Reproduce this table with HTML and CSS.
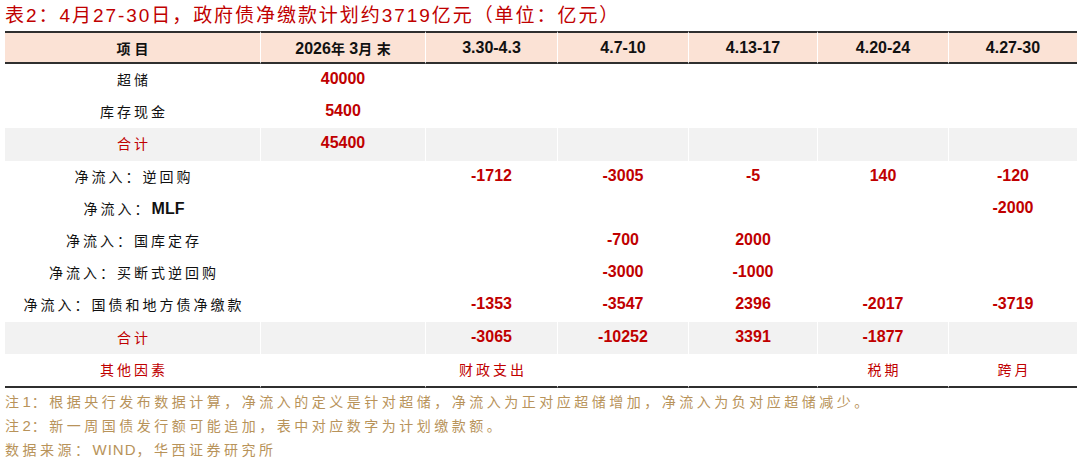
FILE: index.html
```html
<!DOCTYPE html>
<html lang="zh-CN">
<head>
<meta charset="utf-8">
<title>表2</title>
<link rel="stylesheet" href="styles.css">
</head>
<body>
<div class="page">
  <h1 class="title">表2：4月27-30日，政府债净缴款计划约3719亿元（单位：亿元）</h1>
  <table class="tbl">
    <colgroup>
      <col class="c1"><col class="c2"><col class="c3"><col class="c4"><col class="c5"><col class="c6"><col class="c7">
    </colgroup>
    <thead>
      <tr>
        <th><span class="cjk-h">项目</span></th>
        <th>2026<span class="cjk-hb">年</span> 3<span class="cjk-hb">月</span> <span class="cjk-hb">末</span></th>
        <th>3.30-4.3</th>
        <th>4.7-10</th>
        <th>4.13-17</th>
        <th>4.20-24</th>
        <th>4.27-30</th>
      </tr>
    </thead>
    <tbody>
      <tr><td class="lab">超储</td><td class="num">40000</td><td></td><td></td><td></td><td></td><td></td></tr>
      <tr><td class="lab">库存现金</td><td class="num">5400</td><td></td><td></td><td></td><td></td><td></td></tr>
      <tr class="gray"><td class="lab red">合计</td><td class="num">45400</td><td></td><td></td><td></td><td></td><td></td></tr>
      <tr><td class="lab">净流入：逆回购</td><td></td><td class="num">-1712</td><td class="num">-3005</td><td class="num">-5</td><td class="num">140</td><td class="num">-120</td></tr>
      <tr><td class="lab">净流入：<b class="lat">MLF</b></td><td></td><td></td><td></td><td></td><td></td><td class="num">-2000</td></tr>
      <tr><td class="lab">净流入：国库定存</td><td></td><td></td><td class="num">-700</td><td class="num">2000</td><td></td><td></td></tr>
      <tr><td class="lab">净流入：买断式逆回购</td><td></td><td></td><td class="num">-3000</td><td class="num">-1000</td><td></td><td></td></tr>
      <tr><td class="lab">净流入：国债和地方债净缴款</td><td></td><td class="num">-1353</td><td class="num">-3547</td><td class="num">2396</td><td class="num">-2017</td><td class="num">-3719</td></tr>
      <tr class="gray"><td class="lab red">合计</td><td></td><td class="num">-3065</td><td class="num">-10252</td><td class="num">3391</td><td class="num">-1877</td><td></td></tr>
      <tr class="last"><td class="lab red">其他因素</td><td></td><td class="lab red">财政支出</td><td></td><td></td><td class="lab red">税期</td><td class="lab red">跨月</td></tr>
    </tbody>
  </table>
  <div class="notes">
    <p>注<span class="lat">1</span>：根据央行发布数据计算，净流入的定义是针对超储，净流入为正对应超储增加，净流入为负对应超储减少。</p>
    <p>注<span class="lat">2</span>：新一周国债发行额可能追加，表中对应数字为计划缴款额。</p>
    <p>数据来源：<span class="lat">WIND</span>，华西证券研究所</p>
  </div>
</div>
</body>
</html>
```

FILE: styles.css
```css
html, body {
  margin: 0;
  padding: 0;
  background: #ffffff;
}

.page {
  width: 1089px;
  height: 464px;
  padding: 0 0 0 5px;
  box-sizing: border-box;
  font-family: "Liberation Sans", "Noto Sans CJK SC", sans-serif;
}

.title {
  margin: 0;
  height: 31px;
  line-height: 31px;
  font-size: 19px;
  font-weight: normal;
  letter-spacing: 1.95px;
  color: #c00000;
  font-family: "Liberation Sans", "Noto Sans CJK SC", sans-serif;
  white-space: nowrap;
}

.tbl {
  width: 1072px;
  table-layout: fixed;
  border-collapse: separate;
  border-spacing: 0;
}

.c1 { width: 255px; }
.c2 { width: 165px; }
.c3 { width: 132px; }
.c4 { width: 131px; }
.c5 { width: 129px; }
.c6 { width: 131px; }
.c7 { width: 129px; }

.tbl th {
  background: #fbe2d5;
  border-top: 2px solid #2f2f2f;
  border-bottom: 2px solid #2f2f2f;
  height: 29px;
  padding: 0;
  font-family: "Liberation Sans", "Noto Sans CJK SC", sans-serif;
  font-size: 16px;
  font-weight: bold;
  color: #111;
  text-align: center;
  white-space: nowrap;
}

.tbl th + th,
.tbl td + td {
  border-left: 1px solid #ffffff;
}

.cjk-h {
  font-family: "Noto Sans CJK SC", sans-serif;
  font-size: 14px;
  font-weight: bold;
  letter-spacing: 4px;
  padding-left: 4px;
}

.cjk-hb {
  font-family: "Noto Sans CJK SC", sans-serif;
  font-size: 14px;
  font-weight: bold;
}

.tbl td {
  height: 30.2px;
  padding: 0 0 2px 0;
  text-align: center;
  white-space: nowrap;
}

.tbl tr.last td {
  border-bottom: 2px solid #2f2f2f;
}

.tbl tr.gray td {
  background: #f2f2f2;
}

.num {
  font-family: "Liberation Sans", sans-serif;
  font-size: 16px;
  font-weight: bold;
  color: #c00000;
}

.lab {
  font-family: "Noto Sans CJK SC", sans-serif;
  font-size: 14px;
  letter-spacing: 3px;
  text-indent: 3px;
  color: #111;
}

.lab.red {
  color: #c00000;
}

.lat {
  font-family: "Liberation Sans", sans-serif;
  letter-spacing: 0;
}

.lab .lat {
  font-size: 16px;
  font-weight: bold;
}

.notes {
  padding-top: 1px;
}

.notes p {
  margin: 0;
  height: 24px;
  line-height: 24px;
  font-family: "Noto Sans CJK SC", sans-serif;
  font-size: 14px;
  letter-spacing: 3.5px;
  color: #b8935a;
  white-space: nowrap;
}

.notes .lat {
  font-size: 15px;
  letter-spacing: 1px;
}
```
